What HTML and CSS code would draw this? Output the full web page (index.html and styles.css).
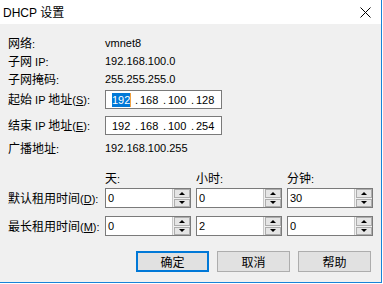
FILE: index.html
```html
<!DOCTYPE html>
<html lang="zh-CN">
<head>
<meta charset="utf-8">
<title>DHCP 设置</title>
<link rel="stylesheet" href="styles.css">
</head>
<body>
<div class="win">
  <div class="titlebar">
    <span class="title">DHCP <span class="zh">设置</span></span>
    <svg class="close" width="11" height="11" viewBox="0 0 11 11"><path d="M0.5 0.5L10.5 10.5M10.5 0.5L0.5 10.5" stroke="#000" stroke-width="1" fill="none"/></svg>
  </div>
  <div class="content">
    <div class="row info r1"><div class="lbl"><span class="zh">网络</span>:</div><div class="val">vmnet8</div></div>
    <div class="row info"><div class="lbl"><span class="zh">子网</span> IP:</div><div class="val">192.168.100.0</div></div>
    <div class="row info"><div class="lbl"><span class="zh">子网掩码</span>:</div><div class="val">255.255.255.0</div></div>

    <div class="row iprow ip1">
      <div class="lbl"><span class="zh">起始</span> IP <span class="zh">地址</span>(<u>S</u>):</div>
      <div class="ipbox"><span class="num sel">192</span><span class="dot">.</span><span class="num">168</span><span class="dot">.</span><span class="num">100</span><span class="dot">.</span><span class="num">128</span></div>
    </div>
    <div class="row iprow ip2">
      <div class="lbl"><span class="zh">结束</span> IP <span class="zh">地址</span>(<u>E</u>):</div>
      <div class="ipbox"><span class="num">192</span><span class="dot">.</span><span class="num">168</span><span class="dot">.</span><span class="num">100</span><span class="dot">.</span><span class="num">254</span></div>
    </div>
    <div class="row info bc"><div class="lbl"><span class="zh">广播地址</span>:</div><div class="val">192.168.100.255</div></div>

    <div class="row hdr">
      <div class="lbl"></div>
      <div class="col"><span class="zh">天</span>:</div>
      <div class="col"><span class="zh">小时</span>:</div>
      <div class="col"><span class="zh">分钟</span>:</div>
    </div>
    <div class="row spinrow s1">
      <div class="lbl"><span class="zh">默认租用时间</span>(<u>D</u>):</div>
      <div class="spin"><div class="sv">0</div><div class="sbtns"><div class="sb up"></div><div class="sb down"></div></div></div>
      <div class="spin"><div class="sv">0</div><div class="sbtns"><div class="sb up"></div><div class="sb down"></div></div></div>
      <div class="spin"><div class="sv">30</div><div class="sbtns"><div class="sb up"></div><div class="sb down"></div></div></div>
    </div>
    <div class="row spinrow s2">
      <div class="lbl"><span class="zh">最长租用时间</span>(<u>M</u>):</div>
      <div class="spin"><div class="sv">0</div><div class="sbtns"><div class="sb up"></div><div class="sb down"></div></div></div>
      <div class="spin"><div class="sv">2</div><div class="sbtns"><div class="sb up"></div><div class="sb down"></div></div></div>
      <div class="spin"><div class="sv">0</div><div class="sbtns"><div class="sb up"></div><div class="sb down"></div></div></div>
    </div>

    <div class="buttons">
      <div class="btn default"><span class="zh">确定</span></div>
      <div class="btn"><span class="zh">取消</span></div>
      <div class="btn"><span class="zh">帮助</span></div>
    </div>
  </div>
</div>
</body>
</html>
```
FILE: styles.css
```css
* { box-sizing: border-box; }
html, body { margin: 0; padding: 0; background: #ffffff; }
body {
  font-family: "Liberation Sans", "Noto Sans CJK SC", sans-serif;
  font-size: 11px;
  color: #000;
}
.zh {
  font-family: "Noto Sans CJK SC", sans-serif;
  font-size: 12px;
}
.win {
  width: 382px;
  height: 283px;
  background: #f0f0f0;
  border-right: 1px solid #1883d7;
  border-bottom: 1px solid #1883d7;
  display: flex;
  flex-direction: column;
}
.titlebar {
  height: 24px;
  background: #fff;
  display: flex;
  align-items: center;
  justify-content: space-between;
  padding-left: 3px;
  padding-right: 10px;
  font-size: 12px;
  line-height: 14px;
}
.title .zh { font-size: 12px; }
.close { display: block; margin-top: 0; }
.content {
  padding-top: 10px;
  display: flex;
  flex-direction: column;
}
.row {
  display: flex;
  align-items: center;
  line-height: 14px;
}
.lbl {
  width: 105px;
  padding-left: 8px;
  white-space: nowrap;
  flex: none;
}
.info { height: 18px; }
.iprow { height: 19px; }
.ip1 { margin-top: 2px; }
.ip2 { margin-top: 7px; }
.bc { margin-top: 4px; }
.ipbox {
  width: 117px;
  height: 19px;
  border: 1px solid #7a7a7a;
  background: #fff;
  padding-left: 6px;
  display: flex;
  align-items: center;
}
.num {
  display: inline-block;
  width: 18px;
  text-align: center;
  height: 14px;
  line-height: 14px;
}
.sel {
  background: #0078d7;
  color: #fff;
  border-right: 1px solid #f0a040;
  width: 19px;
}
.dot {
  display: inline-block;
  width: 10px;
  text-align: right;
  padding-right: 2px;
}
.sel + .dot { width: 9px; }
.hdr { height: 18px; margin-top: 12px; gap: 5px; }
.hdr .lbl { width: 100px; }
.col { width: 86px; }
.spinrow { height: 20px; gap: 5px; }
.spinrow .lbl { width: 100px; }
.s1 { margin-top: 1px; }
.s2 { margin-top: 8px; }
.spin {
  width: 86px;
  height: 20px;
  border: 1px solid #7a7a7a;
  background: #fff;
  display: flex;
}
.sv {
  flex: 1;
  padding-left: 2px;
  display: flex;
  align-items: center;
}
.sbtns {
  width: 18px;
  display: flex;
  flex-direction: column;
  gap: 1px;
  padding: 0 0 0 1px;
  background: #f0f0f0;
  border-left: 1px solid #c8c8c8;
}
.sb {
  flex: 1;
  border: 1px solid #adadad;
  background: #e5e5e5;
  display: flex;
  align-items: center;
  justify-content: center;
}
.sb::before {
  content: "";
  width: 0;
  height: 0;
  border-left: 3px solid transparent;
  border-right: 3px solid transparent;
}
.up::before { border-bottom: 3px solid #000; }
.down::before { border-top: 3px solid #000; }
.buttons {
  margin-top: 15px;
  display: flex;
  justify-content: flex-end;
  gap: 8px;
  padding-right: 10px;
}
.btn {
  width: 73px;
  height: 21px;
  border: 1px solid #adadad;
  background: #e1e1e1;
  display: flex;
  align-items: center;
  justify-content: center;
  line-height: 14px;
}
.btn.default { border: 2px solid #0078d7; }
```
